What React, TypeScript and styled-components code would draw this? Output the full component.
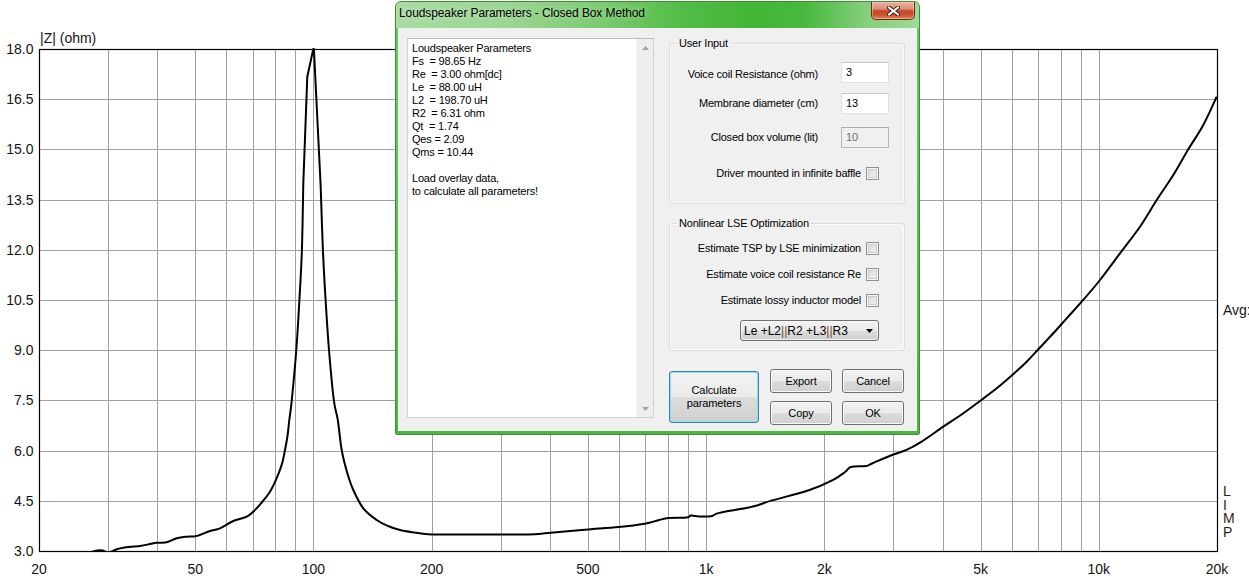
import React from "react";
import styled, { createGlobalStyle } from "styled-components";

const GlobalStyle = createGlobalStyle`
  html, body { margin: 0; padding: 0; background: #ffffff; }
  body { font-family: "Liberation Sans", Arial, sans-serif; }
`;

const Page = styled.div`
  position: relative;
  width: 1249px;
  height: 579px;
  overflow: hidden;
  background: #ffffff;
`;

/* ---------------- Chart ---------------- */

const X0 = 39;
const X1 = 1217;
const Y0 = 49;
const Y1 = 551;
const fx = (f: number) => X0 + ((X1 - X0) * Math.log10(f / 20)) / 3;
const yv = (v: number) => Y0 + ((18 - v) / 15) * (Y1 - Y0);
const crisp = (n: number) => Math.round(n) + 0.5;

const gridFreqs: number[] = [];
[10, 100, 1000, 10000].forEach((d) => {
  for (let m = 1; m <= 9; m++) {
    const f = m * d;
    if (f > 20 && f < 20000) gridFreqs.push(f);
  }
});
const gridVals = [4.5, 6, 7.5, 9, 10.5, 12, 13.5, 15, 16.5];
const yLabels = [18, 16.5, 15, 13.5, 12, 10.5, 9, 7.5, 6, 4.5, 3];
const xLabels: [number, string][] = [
  [20, "20"],
  [50, "50"],
  [100, "100"],
  [200, "200"],
  [500, "500"],
  [1000, "1k"],
  [2000, "2k"],
  [5000, "5k"],
  [10000, "10k"],
  [20000, "20k"],
];

type Pt = [number, number];

const rising: Pt[] = [
  [88, 553], [97, 550.6], [103, 550.6], [107, 552.5], [111.7, 551.5], [116, 549.5],
  [123.3, 547.7], [140, 546], [150, 544], [156.7, 542.7], [166.7, 542.3], [176.7, 538.3],
  [186.7, 536.7], [196.7, 536], [210, 531], [220, 528.3], [233.3, 521], [246.7, 516.7],
  [256.7, 508.3], [263, 501], [270, 491.7], [275, 482], [279.3, 471.7], [282.5, 462],
  [285, 450], [287.5, 436], [289.3, 420], [291.8, 400], [296.3, 350], [299.4, 300],
  [301.9, 250], [303.3, 183.3],
];

const peak: Pt[] = [[307.3, 76.7], [313.3, 49], [313.9, 49], [320.7, 187]];

const falling: Pt[] = [
  [320.7, 187],
  [322.9, 250], [325.6, 300], [329, 350], [333.8, 400], [337.8, 420], [341.7, 450],
  [347, 472], [353.3, 490], [363.3, 508.3], [376.7, 520], [388, 526], [400, 530],
  [418, 533], [431.7, 534.4], [480, 534.6], [528, 534.4], [548, 533], [585, 529.7], [618.8, 527],
  [644.8, 523.7], [658.2, 520.3], [668.4, 518], [686.7, 517.6], [690.8, 515.6],
  [697, 516.3], [711, 516.3], [719.2, 512.9], [751.8, 506.8], [772.1, 500.4],
  [808.8, 490.3], [833.2, 479.9], [845, 472], [851, 467], [866, 466], [872, 463.5],
  [890.2, 455.7], [906.5, 449.9], [920, 442.7], [943.3, 426.7], [963.3, 413.3],
  [981.3, 400], [996.7, 388.3], [1012.3, 375], [1026.7, 361.7], [1038.3, 349.3],
  [1053.3, 333.3], [1066.7, 318.3], [1081.7, 301.7], [1100, 280], [1120, 253.3],
  [1140, 226.7], [1156.7, 200], [1173.3, 175], [1188.3, 149.3], [1203.3, 125],
  [1216.7, 96.7],
];

const smooth = (pts: Pt[], move: boolean) => {
  let d = move ? `M${pts[0][0]},${pts[0][1]}` : `L${pts[0][0]},${pts[0][1]}`;
  for (let i = 0; i < pts.length - 1; i++) {
    const p0 = pts[i - 1] ?? pts[i];
    const p1 = pts[i];
    const p2 = pts[i + 1];
    const p3 = pts[i + 2] ?? p2;
    const c1x = p1[0] + (p2[0] - p0[0]) / 6;
    const c1y = p1[1] + (p2[1] - p0[1]) / 6;
    const c2x = p2[0] - (p3[0] - p1[0]) / 6;
    const c2y = p2[1] - (p3[1] - p1[1]) / 6;
    d += ` C${c1x.toFixed(2)},${c1y.toFixed(2)} ${c2x.toFixed(2)},${c2y.toFixed(2)} ${p2[0]},${p2[1]}`;
  }
  return d;
};

const curvePath =
  smooth(rising, true) +
  " " +
  peak.map(([x, y]) => `L${x},${y}`).join(" ") +
  " " +
  smooth(falling, false);

const ChartSvg = styled.svg`
  display: block;
`;

const AxisLabel = styled.text`
  font-family: "Liberation Sans", Arial, sans-serif;
  font-size: 14px;
  fill: #141414;
`;

const SideLabel = styled.text`
  font-family: "Liberation Sans", Arial, sans-serif;
  font-size: 14px;
  fill: #3a1d0c;
`;

function ImpedanceChart() {
  return (
    <ChartSvg width={1249} height={579} viewBox="0 0 1249 579">
      <defs>
        <clipPath id="plotClip">
          <rect x={X0} y={Y0 - 1} width={X1 - X0} height={Y1 - Y0 + 2} />
        </clipPath>
      </defs>
      {gridFreqs.map((f) => (
        <line
          key={"v" + f}
          x1={crisp(fx(f))}
          x2={crisp(fx(f))}
          y1={Y0}
          y2={Y1}
          stroke="#a0a0a0"
          strokeWidth={1}
        />
      ))}
      {gridVals.map((v) => (
        <line
          key={"h" + v}
          x1={X0}
          x2={X1}
          y1={crisp(yv(v))}
          y2={crisp(yv(v))}
          stroke="#a0a0a0"
          strokeWidth={1}
        />
      ))}
      <rect
        x={39.5}
        y={49.5}
        width={1178}
        height={502}
        fill="none"
        stroke="#000"
        strokeWidth={1.2}
      />
      <path
        clipPath="url(#plotClip)"
        d={curvePath}
        fill="none"
        stroke="#000"
        strokeWidth={2}
        strokeLinejoin="round"
      />
      <AxisLabel x={40} y={43}>|Z| (ohm)</AxisLabel>
      {yLabels.map((v) => (
        <AxisLabel key={"yl" + v} x={33.5} y={yv(v) + 5} textAnchor="end">
          {v.toFixed(1)}
        </AxisLabel>
      ))}
      {xLabels.map(([f, t]) => (
        <AxisLabel key={"xl" + f} x={fx(f)} y={573.5} textAnchor="middle">
          {t}
        </AxisLabel>
      ))}
      <AxisLabel x={1223} y={315}>Avg:</AxisLabel>
      {["L", "I", "M", "P"].map((c, i) => (
        <SideLabel key={c} x={1223} y={496 + i * 13.6}>
          {c}
        </SideLabel>
      ))}
    </ChartSvg>
  );
}

/* ---------------- Dialog ---------------- */

const Window = styled.div`
  position: absolute;
  left: 395px;
  top: 1px;
  width: 525px;
  height: 434px;
  box-sizing: border-box;
  display: flex;
  flex-direction: column;
  padding: 0 2px 3px;
  border: 1px solid #3c8f34;
  border-radius: 6px 6px 2px 2px;
  background: linear-gradient(180deg, #6fc765 0%, #4db544 100%);
  font-family: "Liberation Sans", Arial, sans-serif;
  color: #000;
`;

const TitleBar = styled.div`
  height: 26px;
  margin: 0 -2px;
  padding: 0 4px 0 3px;
  box-sizing: border-box;
  display: flex;
  align-items: flex-start;
  border-radius: 5px 5px 0 0;
  background: linear-gradient(
    90deg,
    #a9dca2 0%,
    #9ad592 22%,
    #79ca6e 40%,
    #52bc46 55%,
    #42b637 68%,
    #48b83d 78%,
    #86cf7c 90%,
    #a0d998 100%
  );
`;

const Title = styled.span`
  font-size: 12px;
  line-height: 23px;
  letter-spacing: -0.1px;
  white-space: nowrap;
  text-shadow: 0 0 6px rgba(255, 255, 255, 0.6);
`;

const CloseButton = styled.div`
  margin-left: auto;
  width: 44px;
  height: 18px;
  box-sizing: border-box;
  border: 1px solid #6b2a18;
  border-top: none;
  border-radius: 0 0 5px 5px;
  background: linear-gradient(
    180deg,
    #eab2a2 0%,
    #dd907a 40%,
    #c5482a 52%,
    #c9512f 75%,
    #e0845f 100%
  );
  box-shadow: inset 0 0 0 1px rgba(255, 220, 200, 0.45);
  display: flex;
  align-items: center;
  justify-content: center;
`;

const Client = styled.div`
  flex: 1;
  display: flex;
  gap: 15px;
  padding: 10px 12px 0 9px;
  background: #f0f0f0;
`;

const TextPanel = styled.div`
  width: 247px;
  height: 380px;
  flex-shrink: 0;
  box-sizing: border-box;
  display: flex;
  border: 1px solid #d2d2d2;
  border-top-color: #bdbdbd;
  background: #ffffff;
`;

const TextContent = styled.div`
  flex: 1;
  padding: 3px 4px;
  font-size: 11px;
  line-height: 13px;
  letter-spacing: -0.2px;
  white-space: pre;
  color: #000;
`;

const ScrollBar = styled.div`
  width: 16px;
  background: #eeeeee;
  border-left: 1px solid #f6f6f6;
  display: flex;
  flex-direction: column;
  justify-content: space-between;
`;

const ScrollArrow = styled.div`
  height: 17px;
  display: flex;
  align-items: center;
  justify-content: center;
`;

const RightColumn = styled.div`
  width: 236px;
  display: flex;
  flex-direction: column;
`;

const GroupBox = styled.div<{ $h: number; $mt: number }>`
  position: relative;
  box-sizing: border-box;
  height: ${(p) => p.$h}px;
  margin-top: ${(p) => p.$mt}px;
  border: 1px solid #d5dfe5;
  border-radius: 3px;
  box-shadow: inset 0 0 0 1px #fbfbfb;
  display: flex;
  flex-direction: column;
`;

const Legend = styled.span`
  position: absolute;
  left: 7px;
  top: -8px;
  padding: 0 2px;
  background: #f0f0f0;
  font-size: 11px;
  line-height: 14px;
  letter-spacing: -0.2px;
`;

const Row = styled.div<{ $mt: number; $pr: number; $h?: number; $gap?: number }>`
  display: flex;
  justify-content: flex-end;
  align-items: center;
  height: ${(p) => p.$h ?? 22}px;
  margin-top: ${(p) => p.$mt}px;
  padding-right: ${(p) => p.$pr}px;
  gap: ${(p) => p.$gap ?? 5}px;
`;

const Label = styled.span<{ $dy?: number }>`
  font-size: 11px;
  letter-spacing: -0.2px;
  white-space: nowrap;
  position: relative;
  top: ${(p) => p.$dy ?? 0}px;
`;

const TextField = styled.div<{ $disabled?: boolean }>`
  width: 48px;
  height: 21px;
  box-sizing: border-box;
  padding: 0 4px;
  display: flex;
  align-items: center;
  font-size: 11px;
  border: 1px solid ${(p) => (p.$disabled ? "#b4b8bb" : "#dde0e6")};
  border-top-color: ${(p) => (p.$disabled ? "#a9adb0" : "#c4c8d0")};
  background: ${(p) => (p.$disabled ? "#f0f0f0" : "#ffffff")};
  color: ${(p) => (p.$disabled ? "#6d6d6d" : "#000")};
`;

const CheckBox = styled.span`
  width: 13px;
  height: 13px;
  box-sizing: border-box;
  border: 1px solid #8f8f8f;
  background: linear-gradient(135deg, #d9d9d9, #f4f4f4);
  box-shadow: inset 0 0 0 1px #f6f6f6, inset 0 0 0 2px #cdcdcd;
  flex-shrink: 0;
`;

const Combo = styled.div`
  width: 139px;
  height: 21px;
  box-sizing: border-box;
  border: 1px solid #707070;
  border-radius: 3px;
  background: linear-gradient(180deg, #f2f2f2 0%, #ebebeb 50%, #dddddd 50%, #cfcfcf 100%);
  box-shadow: inset 0 0 0 1px rgba(255, 255, 255, 0.6);
  display: flex;
  align-items: center;
  justify-content: space-between;
  padding: 0 5px 0 3px;
  font-size: 12px;
`;

const Bars = styled.span`
  color: #7b4a1e;
`;

const ButtonArea = styled.div`
  display: flex;
  align-items: center;
  gap: 11px;
  margin-top: 18px;
`;

const ButtonGrid = styled.div`
  display: grid;
  grid-template-columns: 62px 62px;
  column-gap: 10px;
  row-gap: 8px;
`;

const Button = styled.button<{ $big?: boolean }>`
  box-sizing: border-box;
  width: ${(p) => (p.$big ? 90 : 62)}px;
  height: ${(p) => (p.$big ? 52 : 24)}px;
  margin: 0;
  padding: 0;
  font-family: "Liberation Sans", Arial, sans-serif;
  font-size: 11px;
  line-height: 13px;
  letter-spacing: -0.1px;
  color: #000;
  border: 1px solid ${(p) => (p.$big ? "#3c7fb1" : "#707070")};
  border-radius: 3px;
  background: linear-gradient(180deg, #f2f2f2 0%, #ebebeb 50%, #dddddd 50%, #cfcfcf 100%);
  box-shadow: inset 0 0 0 1px ${(p) => (p.$big ? "#8fdcf7" : "#fafafa")};
`;

const textLines = [
  "Loudspeaker Parameters",
  "Fs  = 98.65 Hz",
  "Re  = 3.00 ohm[dc]",
  "Le  = 88.00 uH",
  "L2  = 198.70 uH",
  "R2  = 6.31 ohm",
  "Qt  = 1.74",
  "Qes = 2.09",
  "Qms = 10.44",
  "",
  "Load overlay data,",
  "to calculate all parameters!",
].join("\n");

function Arrow({ up }: { up?: boolean }) {
  return (
    <svg width="7" height="4" viewBox="0 0 7 4">
      <path d={up ? "M0 4 L3.5 0 L7 4 Z" : "M0 0 L7 0 L3.5 4 Z"} fill="#a3a3a3" />
    </svg>
  );
}

function Dialog() {
  return (
    <Window>
      <TitleBar>
        <Title>Loudspeaker Parameters - Closed Box Method</Title>
        <CloseButton>
          <svg width="13" height="10" viewBox="0 0 13 10">
            <path d="M2 1.5 L11 8.5 M11 1.5 L2 8.5" stroke="#3a1a12" strokeWidth="4" strokeLinecap="square" />
            <path d="M2 1.5 L11 8.5 M11 1.5 L2 8.5" stroke="#ffffff" strokeWidth="2" strokeLinecap="square" />
          </svg>
        </CloseButton>
      </TitleBar>
      <Client>
        <TextPanel>
          <TextContent>{textLines}</TextContent>
          <ScrollBar>
            <ScrollArrow>
              <Arrow up />
            </ScrollArrow>
            <ScrollArrow>
              <Arrow />
            </ScrollArrow>
          </ScrollBar>
        </TextPanel>
        <RightColumn>
          <GroupBox $h={161} $mt={5}>
            <Legend>User Input</Legend>
            <Row $mt={17} $pr={15} $gap={23}>
              <Label $dy={2}>Voice coil Resistance (ohm)</Label>
              <TextField>3</TextField>
            </Row>
            <Row $mt={9} $pr={15} $gap={23}>
              <Label>Membrane diameter (cm)</Label>
              <TextField>13</TextField>
            </Row>
            <Row $mt={12} $pr={15} $gap={23}>
              <Label>Closed box volume (lit)</Label>
              <TextField $disabled>10</TextField>
            </Row>
            <Row $mt={14} $pr={25}>
              <Label>Driver mounted in infinite baffle</Label>
              <CheckBox />
            </Row>
          </GroupBox>
          <GroupBox $h={128} $mt={19}>
            <Legend>Nonlinear LSE Optimization</Legend>
            <Row $mt={16} $pr={25} $h={16}>
              <Label>Estimate TSP by LSE minimization</Label>
              <CheckBox />
            </Row>
            <Row $mt={10} $pr={25} $h={16}>
              <Label>Estimate voice coil resistance Re</Label>
              <CheckBox />
            </Row>
            <Row $mt={10} $pr={25} $h={16}>
              <Label>Estimate lossy inductor model</Label>
              <CheckBox />
            </Row>
            <Row $mt={12} $pr={25} $h={21}>
              <Combo>
                <span>
                  Le +L2<Bars>||</Bars>R2 +L3<Bars>||</Bars>R3
                </span>
                <svg width="7" height="4" viewBox="0 0 7 4">
                  <path d="M0 0 L7 0 L3.5 4 Z" fill="#000" />
                </svg>
              </Combo>
            </Row>
          </GroupBox>
          <ButtonArea>
            <Button $big>
              Calculate
              <br />
              parameters
            </Button>
            <ButtonGrid>
              <Button>Export</Button>
              <Button>Cancel</Button>
              <Button>Copy</Button>
              <Button>OK</Button>
            </ButtonGrid>
          </ButtonArea>
        </RightColumn>
      </Client>
    </Window>
  );
}

export default function App() {
  return (
    <>
      <GlobalStyle />
      <Page>
        <ImpedanceChart />
        <Dialog />
      </Page>
    </>
  );
}
